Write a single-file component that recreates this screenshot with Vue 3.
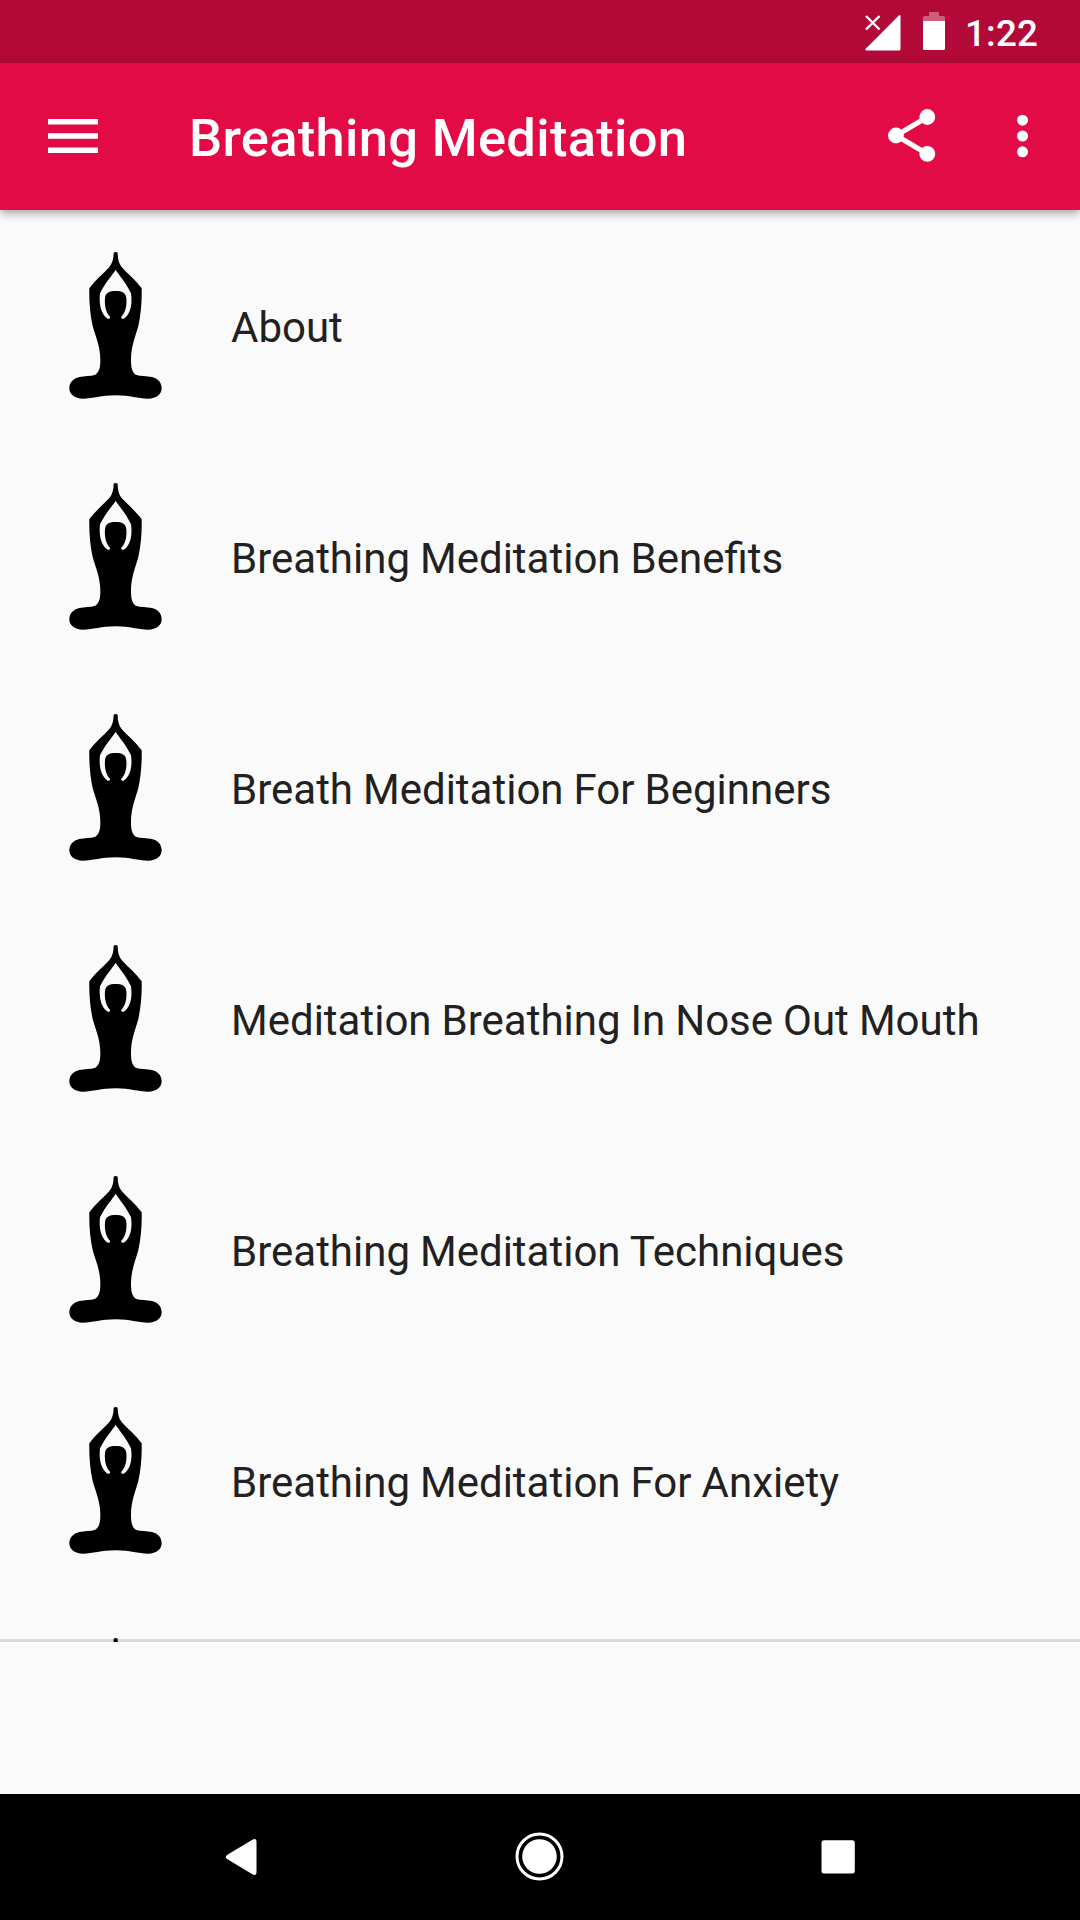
<script setup>
import { ref } from "vue";

const title = ref("Breathing Meditation");

const topics = ref([
  "About",
  "Breathing Meditation Benefits",
  "Breath Meditation For Beginners",
  "Meditation Breathing In Nose Out Mouth",
  "Breathing Meditation Techniques",
  "Breathing Meditation For Anxiety",
  "",
]);
</script>

<template>
  <div class="screen">
    <div class="status_bar">
      <svg class="signal" viewBox="0 0 36 36">
        <path
          d="M34 0.3 Q35.5 -0.3 35.5 1.5 V34 Q35.5 35.5 34 35.5 H1.5 Q-0.5 35.3 0.7 33.8 L15.5 19 Z"
          fill="#fff"
        />
        <path d="M1 1 L14.5 14.5 M14.5 1 L1 14.5" stroke="#fff" stroke-width="2.4" />
      </svg>
      <svg class="battery" viewBox="0 0 22 38">
        <path d="M6 0 H16 V4 H20.5 Q22 4 22 5.5 V9 H0 V5.5 Q0 4 1.5 4 H6 Z" fill="#fff" opacity="0.35" />
        <path d="M0 9 H22 V36.5 Q22 38 20.5 38 H1.5 Q0 38 0 36.5 Z" fill="#fff" />
      </svg>
      <span class="clock">1:22</span>
    </div>

    <header class="toolbar">
      <svg class="menu" viewBox="0 0 50 34">
        <path d="M0 0 H50 V5.5 H0 Z M0 14.3 H50 V19.8 H0 Z M0 28.5 H50 V34 H0 Z" fill="#fff" />
      </svg>
      <h1>{{ title }}</h1>
      <svg class="share" viewBox="0 0 48 53">
        <path d="M39.5 8 L8 26.5 L39.5 45" fill="none" stroke="#fff" stroke-width="5" />
        <circle cx="39.3" cy="8" r="7.9" fill="#fff" />
        <circle cx="8" cy="26.5" r="7.9" fill="#fff" />
        <circle cx="39.3" cy="44.9" r="7.9" fill="#fff" />
      </svg>
      <svg class="more" viewBox="0 0 11 44">
        <circle cx="5.5" cy="6.2" r="5.5" fill="#fff" />
        <circle cx="5.5" cy="22" r="5.5" fill="#fff" />
        <circle cx="5.5" cy="37.8" r="5.5" fill="#fff" />
      </svg>
    </header>

    <main>
      <ul class="topics">
        <li v-for="(topic, index) in topics" :key="index" class="topic">
          <svg class="figure" viewBox="-24 36 441 441">
            <path
              fill-rule="evenodd"
              d="M191 38 Q197 34 203 38 C203 56 206 70 215 81 C232 100 258 121 275 145 C276 180 273 222 265 258 C257 288 243 318 243 360 C243 382 246 396 257 404 C272 409 290 407 306 411 C324 415 335 428 335 445 C335 463 318 476 295 476 C262 476 242 466 197 466 C152 466 130 476 98 476 C75 476 58 463 58 445 C58 428 70 415 88 411 C104 407 121 409 136 404 C148 396 151 382 151 360 C151 318 136 288 128 258 C120 222 117 180 118 145 C135 121 161 100 178 81 C187 70 191 56 191 38 Z M197 89 C189 103 166 127 150 160 C146 195 154 224 173 236 C176 238 182 234 180 230 C169 219 163 200 165 175 C166 158 179 153 197 153 C215 153 228 158 229 175 C231 200 225 219 214 230 C212 234 218 238 221 236 C240 224 248 195 243 160 C228 127 205 103 197 89 Z"
            />
          </svg>
          <span>{{ topic }}</span>
        </li>
      </ul>
    </main>

    <nav class="nav_bar">
      <svg viewBox="0 0 299 126">
        <path
          d="M136 61 L161 46 Q165.500 43.500 165.500 48 V78 Q165.500 82.500 161 80 L136 65 Q133.500 63 136 61 Z"
          fill="#fff"
        />
      </svg>
      <svg viewBox="0 0 299 126">
        <circle cx="149.500" cy="62.500" r="22.500" fill="none" stroke="#fff" stroke-width="3" />
        <circle cx="149.500" cy="62.500" r="17.300" fill="#fff" />
      </svg>
      <svg viewBox="0 0 299 126">
        <rect x="132.500" y="46.300" width="33.300" height="33.300" rx="2.500" fill="#fff" />
      </svg>
    </nav>
  </div>
</template>

<style>
body {
  margin: 0;
}
</style>

<style scoped>
.screen {
  width: 1080px;
  height: 1920px;
  display: flex;
  flex-direction: column;
  overflow: hidden;
  background: #fafafa;
  font-family: Roboto, sans-serif;
}

.status_bar {
  box-sizing: border-box;
  height: 63px;
  flex: none;
  display: flex;
  justify-content: flex-end;
  align-items: flex-start;
  padding: 12px 42px 0 0;
  background: #b30938;
}

.signal {
  width: 36px;
  height: 36px;
  margin: 3px 22px 0 0;
}

.battery {
  width: 22px;
  height: 38px;
  margin-right: 20px;
}

.clock {
  width: 73px;
  margin-top: 1px;
  color: #fff;
  font-size: 36.75px;
  font-weight: 500;
  line-height: 42px;
  letter-spacing: 0.2px;
}

.toolbar {
  box-sizing: border-box;
  position: relative;
  height: 147px;
  flex: none;
  display: flex;
  align-items: center;
  padding: 0 52px 2px 48px;
  background: #e20b45;
  box-shadow: 0 3px 9px rgba(0, 0, 0, 0.36);
}

.menu {
  width: 50px;
  height: 34px;
}

.toolbar h1 {
  flex: 1;
  margin: 5px 0 0 91px;
  color: #fff;
  font-size: 52.5px;
  font-weight: 500;
  line-height: 62px;
  letter-spacing: 0.3px;
}

.share {
  width: 48px;
  height: 53px;
  margin-right: 81px;
}

.more {
  width: 11px;
  height: 44px;
}

main {
  flex: 1;
}

.topics {
  height: 1432px;
  margin: 0;
  padding: 0;
  overflow: hidden;
  list-style: none;
  background: linear-gradient(#dadada, #dadada) bottom / 100% 3px no-repeat;
}

.topic {
  box-sizing: border-box;
  height: 231px;
  display: flex;
  align-items: center;
  padding: 0 42px;
  color: #212121;
  font-size: 42px;
}

.topic span {
  line-height: 50px;
  white-space: nowrap;
  margin-top: 5px;
  word-spacing: -0.4px;
}

.figure {
  width: 147px;
  height: 147px;
  flex: none;
  margin-right: 42px;
}

.nav_bar {
  box-sizing: border-box;
  height: 126px;
  flex: none;
  display: flex;
  justify-content: center;
  padding-right: 2px;
  background: #000;
}

.nav_bar svg {
  width: 299px;
  height: 126px;
}
</style>
